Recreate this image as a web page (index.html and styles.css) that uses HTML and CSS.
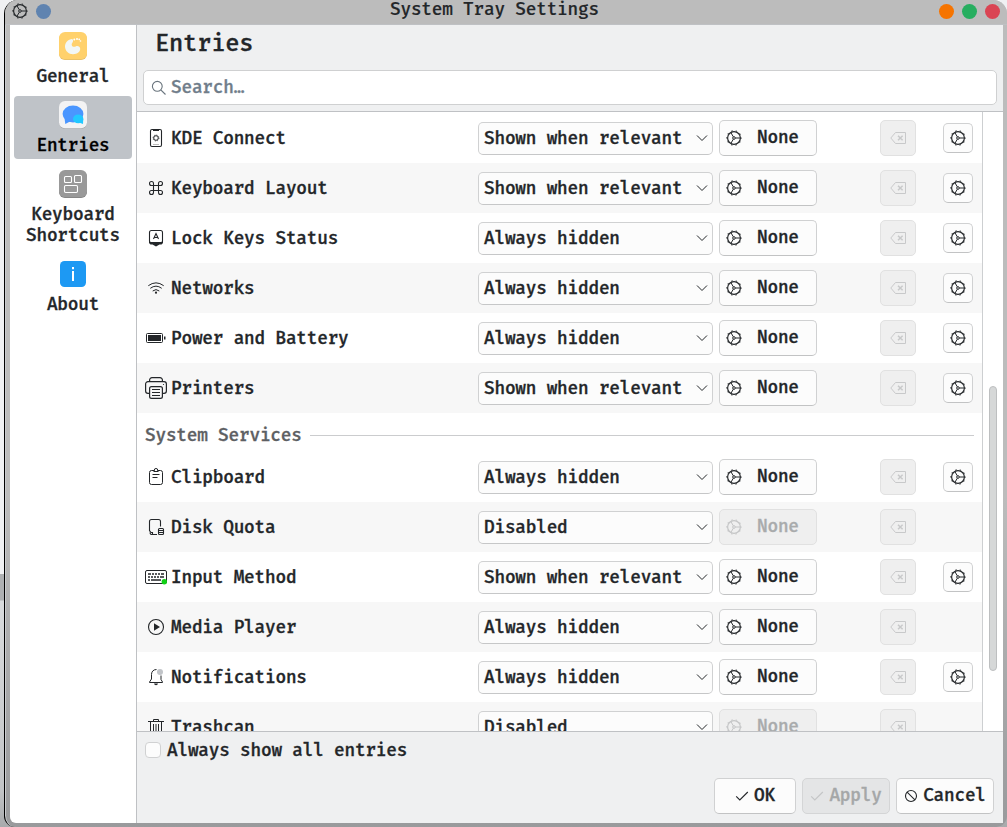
FILE: index.html
```html
<!DOCTYPE html>
<html lang="en">
<head>
<meta charset="utf-8">
<title>System Tray Settings</title>
<link rel="stylesheet" href="styles.css">
</head>
<body>
<svg class="defs" width="0" height="0">
  <symbol id="gear" viewBox="0 0 16 16"><g fill="none" stroke="currentColor"><circle cx="8" cy="8" r="6.4" stroke-width="1.2"/><circle cx="8" cy="8" r="7.3" stroke-width="1" stroke-dasharray="1.4 3.187" stroke-dashoffset=".7"/><circle cx="8" cy="8" r="1.3"/><path d="M9.4 8H14M7.300 6.800 5 2.800M7.300 9.200 5 13.200"/></g></symbol>
  <symbol id="chev" viewBox="0 0 12 12"><path d="M1 3.500 6 8.500 11 3.500" fill="none" stroke="currentColor" stroke-width="1"/></symbol>
  <symbol id="clear" viewBox="0 0 16 16"><path d="M5.500 2.500h10v11h-10L.8 8z" fill="none" stroke="currentColor"/><path d="M8 5.700l4.600 4.600M12.600 5.700l-4.600 4.600" fill="none" stroke="currentColor" stroke-width="1.500"/></symbol>
  <symbol id="check" viewBox="0 0 14 14"><path d="M1.200 7.400 4.800 11 12.800 3" fill="none" stroke="currentColor" stroke-width="1.100"/></symbol>
</svg>
<div class="window">
  <header class="titlebar">
    <svg class="app-icon" width="16" height="16"><use href="#gear"/></svg>
    <span class="dot pin"></span>
    <h1 class="title">System Tray Settings</h1>
    <span class="dot min"></span><span class="dot max"></span><span class="dot close"></span>
  </header>
  <div class="body">
    <nav class="sidebar">
      <a class="nav-item"><svg width="28" height="28" viewBox="0 0 28 28"><rect y="1" width="28" height="27" rx="6" fill="#e3bd68"/><rect width="28" height="27.300" rx="6" fill="#ffd16c"/><path d="M12.500 7C8.500 7.800 6 11 6 14.500 6 19 9.800 22.200 14 22.200 18.500 22.200 21.300 19.600 21.200 16.800 21 14.300 18.500 13.500 16.600 14.500 15 15.300 13 14.600 12.700 12.900 12.500 11.400 13.900 10.500 14.100 9 14.200 7.600 13.500 6.900 12.500 7Z" fill="#f2f7f5"/><g fill="#fff"><circle cx="15.300" cy="7.500" r="1"/><circle cx="18" cy="7" r="1"/><circle cx="20.200" cy="7.300" r=".9"/><circle cx="21.500" cy="9" r=".8"/></g></svg><span>General</span></a>
      <a class="nav-item active"><svg width="28" height="28" viewBox="0 0 28 28"><rect y="1" width="28" height="27" rx="6" fill="#a9abae"/><rect width="28" height="27.300" rx="6" fill="#f3f3f4"/><ellipse cx="14" cy="13" rx="10.400" ry="8.400" fill="#4a96ff"/><path d="M5.500 17 6.300 23 10.500 20.800 17 21Z" fill="#4a96ff"/><ellipse cx="19.200" cy="17.900" rx="5.200" ry="4.300" fill="#22c8ff"/><path d="M24.200 18 24 23.100 20 21.500Z" fill="#22c8ff"/></svg><span>Entries</span></a>
      <a class="nav-item"><svg width="28" height="28" viewBox="0 0 28 28"><rect y="1" width="28" height="27" rx="6" fill="#808080"/><rect width="28" height="27.300" rx="6" fill="#999"/><g fill="none" stroke="#fff" stroke-width="1.100"><rect x="5.500" y="6.500" width="7" height="6" rx="1"/><rect x="15.500" y="5.500" width="7" height="7" rx="1"/><rect x="5.500" y="15.500" width="13" height="7" rx="1.200"/></g></svg><span>Keyboard<br>Shortcuts</span></a>
      <a class="nav-item"><svg width="28" height="28" viewBox="0 0 28 28"><rect x="1" y="1" width="26" height="26" rx="4.500" fill="#1d99f3"/><path d="M13 7h2v2.200h-2zM13 11h2v10h-2z" fill="#fff"/></svg><span>About</span></a>
    </nav>
    <main class="main">
      <div class="head">
        <h2>Entries</h2>
        <div class="search"><svg width="16" height="16" viewBox="0 0 16 16"><g fill="none" stroke="#69747d" stroke-width="1.100"><circle cx="6.300" cy="6.300" r="4.900"/><path d="M9.800 9.800 14.500 14.500"/></g></svg><span>Search…</span></div>
      </div>
      <div class="scroll">
        <div class="list">
          <div class="row"><div class="name"><svg width="22" height="22" viewBox="0 0 22 22"><rect x="5.500" y="2.500" width="11" height="17" rx="1.500" fill="none" stroke="currentColor" stroke-width="1.100"/><path d="M8 2h6v2H8z"/><circle cx="11" cy="11" r="2.300" fill="none" stroke="currentColor"/><circle cx="11" cy="11" r="3" fill="none" stroke="currentColor" stroke-width=".7" stroke-dasharray="1.200 1.156"/><path d="M8 17.500h6" stroke="#bbb"/></svg>KDE Connect</div><div class="combo">Shown when relevant<svg><use href="#chev"/></svg></div><div class="btn key"><svg><use href="#gear"/></svg>None</div><div class="btn clear off"><svg><use href="#clear"/></svg></div><div class="btn conf"><svg><use href="#gear"/></svg></div></div>
          <div class="row alt"><div class="name"><svg width="22" height="22" viewBox="0 0 22 22"><path d="M8.500 8.500h5v5h-5zM8.500 8.500H6.500a2 2 0 1 1 2-2zM13.500 8.500v-2a2 2 0 1 1 2 2zM8.500 13.500v2a2 2 0 1 1-2-2zM13.500 13.500h2a2 2 0 1 1-2 2z" fill="none" stroke="currentColor" stroke-width="1.100"/></svg>Keyboard Layout</div><div class="combo">Shown when relevant<svg><use href="#chev"/></svg></div><div class="btn key"><svg><use href="#gear"/></svg>None</div><div class="btn clear off"><svg><use href="#clear"/></svg></div><div class="btn conf"><svg><use href="#gear"/></svg></div></div>
          <div class="row"><div class="name"><svg width="22" height="22" viewBox="0 0 22 22"><rect x="4.500" y="3.500" width="13" height="12.500" rx="2" fill="none" stroke="currentColor" stroke-width="1.100"/><path d="M4 14 5.500 15h11L18 14v2L16.500 17.500H14.500L11 19.500 7.500 17.500H5.500L4 16z"/><path d="M8.500 12 11 6.500l2.500 5.500M9.300 10.500h3.400" fill="none" stroke="currentColor" stroke-width="1.100"/></svg>Lock Keys Status</div><div class="combo">Always hidden<svg><use href="#chev"/></svg></div><div class="btn key"><svg><use href="#gear"/></svg>None</div><div class="btn clear off"><svg><use href="#clear"/></svg></div><div class="btn conf"><svg><use href="#gear"/></svg></div></div>
          <div class="row alt"><div class="name"><svg width="22" height="22" viewBox="0 0 22 22"><path d="M3.300 8.700Q11 3 18.700 8.700M5.300 11.300Q11 7 16.700 11.300M7.700 14Q11 11.200 14.300 14" fill="none" stroke="currentColor" stroke-width="1"/><circle cx="11" cy="15.700" r="1.100"/></svg>Networks</div><div class="combo">Always hidden<svg><use href="#chev"/></svg></div><div class="btn key"><svg><use href="#gear"/></svg>None</div><div class="btn clear off"><svg><use href="#clear"/></svg></div><div class="btn conf"><svg><use href="#gear"/></svg></div></div>
          <div class="row"><div class="name"><svg width="22" height="22" viewBox="0 0 22 22"><rect x="1.500" y="6.500" width="16" height="9" rx="1" fill="none" stroke="currentColor"/><path d="M3 8h13v6H3zM19 9.500h1.500v3H19z"/></svg>Power and Battery</div><div class="combo">Always hidden<svg><use href="#chev"/></svg></div><div class="btn key"><svg><use href="#gear"/></svg>None</div><div class="btn clear off"><svg><use href="#clear"/></svg></div><div class="btn conf"><svg><use href="#gear"/></svg></div></div>
          <div class="row alt"><div class="name"><svg width="22" height="22" viewBox="0 0 22 22"><g fill="none" stroke="currentColor" stroke-width="1.200"><path d="M4.600 4.600V3A2.400 2.400 0 0 1 7 .6h8A2.400 2.400 0 0 1 17.400 3v1.600M4.600 16.400H3A2.400 2.400 0 0 1 .6 14V7A2.400 2.400 0 0 1 3 4.600h16A2.400 2.400 0 0 1 21.400 7v7a2.400 2.400 0 0 1-2.400 2.400h-1.600"/><path d="M6.500 9.600h9a1.900 1.900 0 0 1 1.900 1.900v8a1.900 1.900 0 0 1-1.900 1.900h-9a1.900 1.900 0 0 1-1.900-1.900v-8a1.900 1.900 0 0 1 1.900-1.900z"/><path d="M7 12.500h8M7 15.500h8M7 18.500h8" stroke-width="1"/></g><circle cx="18.500" cy="7.500" r=".6"/></svg>Printers</div><div class="combo">Shown when relevant<svg><use href="#chev"/></svg></div><div class="btn key"><svg><use href="#gear"/></svg>None</div><div class="btn clear off"><svg><use href="#clear"/></svg></div><div class="btn conf"><svg><use href="#gear"/></svg></div></div>
          <div class="section"><span>System Services</span></div>
          <div class="row"><div class="name"><svg width="22" height="22" viewBox="0 0 22 22"><g fill="none" stroke="currentColor"><path d="M9 4.500H6.500a2 2 0 0 0-2 2v10a2 2 0 0 0 2 2h9a2 2 0 0 0 2-2v-10a2 2 0 0 0-2-2H13M8.500 5.500h5M9.300 5V4a1.700 1.500 0 0 1 3.400 0v1M7.500 8.500h7M7.500 11.500h5"/></g></svg>Clipboard</div><div class="combo">Always hidden<svg><use href="#chev"/></svg></div><div class="btn key"><svg><use href="#gear"/></svg>None</div><div class="btn clear off"><svg><use href="#clear"/></svg></div><div class="btn conf"><svg><use href="#gear"/></svg></div></div>
          <div class="row alt"><div class="name"><svg width="22" height="22" viewBox="0 0 22 22"><g fill="none" stroke="currentColor" stroke-width="1.100"><path d="M12 18.500H6.500A1.500 1.500 0 0 1 5.500 16L4.500 14.500v-9a2 2 0 0 1 2-2h7a2 2 0 0 1 2 2v5M6 16.500h1.500v2"/><rect x="13.500" y="12.500" width="5" height="6" rx="1"/><path d="M13.500 14.500h5M13.500 16.500h5"/></g></svg>Disk Quota</div><div class="combo">Disabled<svg><use href="#chev"/></svg></div><div class="btn key off"><svg><use href="#gear"/></svg>None</div><div class="btn clear off"><svg><use href="#clear"/></svg></div></div>
          <div class="row"><div class="name"><svg width="22" height="22" viewBox="0 0 22 22"><rect x=".5" y="4.500" width="21" height="13" rx="1.500" fill="none" stroke="currentColor"/><path d="M3 8h3M7 8h2M10 8h2M13 8h2M16 8h3M3 11h2M6 11h2M9 11h2M12 11h2M15 11h4M3 14h2M6 14h10" stroke="currentColor" stroke-width="1.700"/><circle cx="19.300" cy="15.700" r="2.700" fill="#11d116"/></svg>Input Method</div><div class="combo">Shown when relevant<svg><use href="#chev"/></svg></div><div class="btn key"><svg><use href="#gear"/></svg>None</div><div class="btn clear off"><svg><use href="#clear"/></svg></div><div class="btn conf"><svg><use href="#gear"/></svg></div></div>
          <div class="row alt"><div class="name"><svg width="22" height="22" viewBox="0 0 22 22"><circle cx="11" cy="11" r="7.500" fill="none" stroke="currentColor" stroke-width="1.100"/><path d="M9 7.300v7.400L15 11z"/></svg>Media Player</div><div class="combo">Always hidden<svg><use href="#chev"/></svg></div><div class="btn key"><svg><use href="#gear"/></svg>None</div><div class="btn clear off"><svg><use href="#clear"/></svg></div></div>
          <div class="row"><div class="name"><svg width="22" height="22" viewBox="0 0 22 22"><path d="M11.500 3.500C8 3.500 6.500 6 6.500 8.500v4.500l-2 3v.5h13V16l-1.500-2.500v-4" fill="none" stroke="currentColor"/><path d="M9 17.500h4q-.3 1.800-2 1.800t-2-1.800z"/><circle cx="15" cy="6" r="3" fill="#c1c4c8"/></svg>Notifications</div><div class="combo">Always hidden<svg><use href="#chev"/></svg></div><div class="btn key"><svg><use href="#gear"/></svg>None</div><div class="btn clear off"><svg><use href="#clear"/></svg></div><div class="btn conf"><svg><use href="#gear"/></svg></div></div>
          <div class="row alt"><div class="name"><svg width="22" height="22" viewBox="0 0 22 22"><path d="M3 5.500h16M8.500 5.500v-2h5v2M5.500 5.500v13h11v-13M8.500 8v8M11 8v8M13.500 8v8" fill="none" stroke="currentColor"/></svg>Trashcan</div><div class="combo">Disabled<svg><use href="#chev"/></svg></div><div class="btn key off"><svg><use href="#gear"/></svg>None</div><div class="btn clear off"><svg><use href="#clear"/></svg></div></div>
        </div>
        <div class="track"><div class="thumb"></div></div>
      </div>
      <footer class="footer">
        <label class="check"><span class="box"></span>Always show all entries</label>
        <div class="actions">
          <div class="btn ok"><svg><use href="#check"/></svg>OK</div>
          <div class="btn apply"><svg><use href="#check"/></svg>Apply</div>
          <div class="btn cancel"><svg viewBox="0 0 14 14"><g fill="none" stroke="currentColor" stroke-width="1.100"><circle cx="7" cy="7" r="5.500"/><path d="M3.100 3.100 10.900 10.900"/></g></svg>Cancel</div>
        </div>
      </footer>
    </main>
  </div>
</div>
</body>
</html>
```

FILE: styles.css
```css
* { box-sizing: border-box; }

body {
  margin: 0;
  width: 1007px;
  height: 827px;
  overflow: hidden;
  padding-left: 4px;
  background: linear-gradient(#f0f1f3 0 574px, #aeb0b2 574px 600px, #d9dbdd 601px, #c2c4c6 790px, #a8aaac);
  font-family: "Fira Code", "Fira Mono", "DejaVu Sans Mono", monospace;
  font-size: 17.33px;
  font-weight: 500;
  letter-spacing: -.22px;
  color: #232629;
  -webkit-text-stroke: .3px currentColor;
}

.defs { display: block; position: absolute; }
svg { flex: none; fill: currentColor; }

.window {
  width: 1003px;
  height: 827px;
  border-left: 1px solid #000;
  border-radius: 14px 14px 11px 11px;
  background: linear-gradient(#bcbcbc 60%, #999a9c);
  box-shadow: inset 1px 0 #c9cbce;
  overflow: hidden;
}

.titlebar {
  height: 25px;
  display: flex;
  align-items: center;
  padding: 0 7px 2px 7px;
  background: #bcbcbc;
  border-bottom: 1px solid #bfc1c4;
}
.title {
  flex: 1;
  margin: 0 0 2px;
  padding-left: 339px;
  font-size: 17.33px;
  font-weight: 500;
  line-height: 20px;
  white-space: nowrap;
  -webkit-text-stroke-width: .15px;
}
.dot { width: 15px; height: 15px; border-radius: 50%; margin-left: 8px; }
.pin { background: #5f83b0; }
.min { background: #f67400; }
.max { background: #27ae60; }
.close { background: #da4453; }

.body { display: flex; height: 798px; margin: 0 4px 0 5px; }

.sidebar {
  width: 127px;
  flex: none;
  padding: 2px 4px;
  display: flex;
  flex-direction: column;
  gap: 6px;
  background: #fff;
  border-right: 1px solid #bfc1c4;
  border-bottom-left-radius: 6px;
}
.nav-item {
  width: 118px;
  display: flex;
  flex-direction: column;
  align-items: center;
  gap: 6px;
  padding: 5px 0 3px;
  border-radius: 4px;
  text-align: center;
  line-height: 21px;
}
.nav-item.active { background: #bfc3c8; color: #000; }

.main { width: 866px; flex: none; display: flex; flex-direction: column; background: #eff0f1; }

.head { height: 87px; padding: 6px 6px 0 6px; border-bottom: 1px solid #bfc1c4; }
h2 { margin: 0 0 13px 12px; font-size: 23.2px; font-weight: 500; line-height: 26px; }
.search {
  height: 35px;
  display: flex;
  align-items: center;
  gap: 4px;
  padding: 0 0 1px 7px;
  background: #fff;
  border: 1px solid #cfd0d1;
  border-radius: 5px;
  color: #707d8a;
}
.search svg { margin-top: 2px; }

.scroll { height: 619px; display: flex; background: #fff; overflow: hidden; }
.list { width: 846px; flex: none; padding-top: 1px; border-right: 1px solid #cdcfd1; }

.row {
  height: 50px;
  display: grid;
  grid-template-columns: 333px 235px 98px 36px 30px;
  align-items: center;
  padding-left: 8px;
}
.row.alt { background: #f7f7f7; }
.name { display: flex; align-items: center; gap: 4px; white-space: nowrap; }

.combo {
  height: 33px;
  display: flex;
  align-items: center;
  justify-content: space-between;
  padding: 0 4px 1px 5px;
  margin-top: 1px;
  background: #fcfcfc;
  border: 1px solid #d0d1d2;
  border-bottom-color: #c6c7c8;
  border-radius: 5px;
  white-space: nowrap;
}
.combo svg { width: 12px; height: 12px; }

.btn {
  height: 36px;
  display: flex;
  align-items: center;
  background: #fcfcfc;
  border: 1px solid #d0d1d2;
  border-bottom-color: #c2c3c4;
  border-radius: 5px;
}
.btn svg { width: 16px; height: 16px; }
.key { margin: 0 -6px 0 6px; padding: 0 0 1px 6px; gap: 15px; }
.key svg { margin-top: 1px; }
.clear { margin: 0 -69px 0 69px; justify-content: center; }
.conf { height: 30px; margin: 0 -96px 0 96px; justify-content: center; }
.off { background: #efefef; border-color: #e1e1e1; color: #a9abac; }
.key.off svg { color: #c4c5c6; }
.clear.off { color: #c8c9ca; }

.section {
  height: 39px;
  display: flex;
  align-items: center;
  gap: 8px;
  padding: 6px 8px 0 8px;
  color: #5d6063;
}
.section::after { content: ""; flex: 1; height: 1px; background: #cbccce; }

.track { flex: 1; padding: 274px 0 0 6px; }
.thumb { width: 8px; height: 285px; background: #d6d8d8; border: 1px solid #bdbfc0; border-radius: 4px; }

.footer { flex: 1; padding: 8px 9px 0 8px; border-top: 1px solid #bfc1c4; }
.check { display: flex; align-items: center; gap: 6px; height: 20px; }
.box { width: 16px; height: 16px; background: #fcfcfc; border: 1px solid #d0d1d2; border-radius: 4px; }
.actions { display: flex; justify-content: flex-end; gap: 6px; margin-top: 18px; }
.actions .btn { justify-content: center; gap: 5px; padding-bottom: 2px; }
.actions svg { width: 14px; height: 14px; margin-top: 2px; }
.ok { width: 82px; }
.apply { width: 88px; background: #e4e5e6; border-color: #d4d5d6; color: #a5a7a8; }
.apply svg { opacity: .5; }
.cancel { width: 98px; }
```
